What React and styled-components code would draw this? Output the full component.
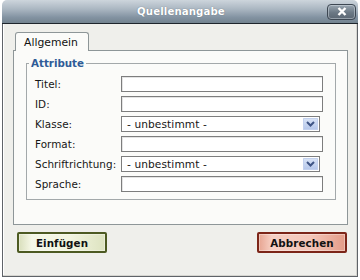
import React from "react";
import styled, { createGlobalStyle } from "styled-components";

const Global = createGlobalStyle`
  html, body { margin: 0; padding: 0; background: #ffffff; }
  body { font-family: "DejaVu Sans", Verdana, sans-serif; }
  * { box-sizing: border-box; }
`;

const Window = styled.div`
  width: 356px;
  height: 277px;
  margin-left: 2px;
  display: flex;
  flex-direction: column;
`;

const TitleBar = styled.div`
  height: 24px;
  flex: none;
  display: grid;
  grid-template-columns: 1fr auto 1fr;
  align-items: center;
  border-radius: 5px 5px 0 0;
  border-bottom: 1px solid #1e252c;
  background: linear-gradient(#cdd5dc 0%, #aab6c1 40%, #8393a2 75%, #73838f 100%);
  padding: 0 2px 1px 0;
`;

const Title = styled.div`
  grid-column: 2;
  color: #ffffff;
  font-weight: bold;
  font-size: 10.2px;
  letter-spacing: 0.1px;
  text-shadow: 0 0 1px rgba(40, 50, 60, 0.6);
  padding-left: 4px;
`;

const CloseButton = styled.button`
  grid-column: 3;
  justify-self: end;
  width: 29px;
  height: 16px;
  padding: 0;
  margin-top: 1px;
  border: 1px solid #3d4752;
  border-radius: 4px;
  background: linear-gradient(#9aa6b1, #6b7884 55%, #5b6773);
  box-shadow: inset 0 0 0 1px rgba(220, 228, 235, 0.45);
  display: flex;
  align-items: center;
  justify-content: center;
`;

const Body = styled.div`
  flex: 1;
  display: flex;
  flex-direction: column;
  background: #efefeb;
  border: 1px solid #5f6368;
  border-top: none;
  box-shadow: inset -1px -1px 0 #d6d5d0, inset 1px 0 0 #ffffff;
  padding: 8px 9px 0 10px;
`;

const TabStrip = styled.div`
  display: flex;
  padding-left: 2px;
`;

const Tab = styled.div`
  width: 74px;
  height: 19px;
  margin-bottom: -1px;
  position: relative;
  z-index: 1;
  background: #fbfbf9;
  border: 1px solid #8e9698;
  border-bottom: none;
  border-radius: 3px 3px 0 0;
  font-size: 10.8px;
  color: #111;
  padding: 3px 0 0 8px;
  line-height: 13px;
`;

const Panel = styled.div`
  height: 175px;
  background: #fbfbf9;
  border: 1px solid #8e9698;
  padding: 6px 11px 0 12px;
`;

const Fieldset = styled.fieldset`
  margin: 0;
  padding: 6px 12px 7px 8px;
  border: 1px solid #a3a8aa;
  display: grid;
  grid-template-columns: 86px 1fr;
  grid-auto-rows: 16px;
  row-gap: 4px;
  align-items: center;
`;

const Legend = styled.legend`
  margin-left: -6px;
  padding: 0 2px;
  font-weight: bold;
  font-size: 10.3px;
  color: #2f5b97;
  line-height: 13px;
`;

const Label = styled.label`
  font-size: 10.4px;
  color: #161616;
  letter-spacing: 0.05px;
  white-space: nowrap;
`;

const TextInput = styled.div`
  height: 16px;
  background: #ffffff;
  border: 1px solid #7d7d7d;
  box-shadow: inset 1px 1px 0 #e4e4e4;
`;

const Select = styled.div`
  height: 16px;
  margin-right: 3px;
  background: #ffffff;
  border: 1px solid #7d7d7d;
  display: flex;
  align-items: center;
  justify-content: space-between;
  padding: 0 1px 0 5px;
  font-size: 10.6px;
  color: #161616;
  letter-spacing: 0.1px;
`;

const ArrowBox = styled.span`
  width: 15px;
  height: 12px;
  border-radius: 1px;
  background: linear-gradient(#dbe5f6, #b4c6ea);
  box-shadow: inset 0 0 0 1px #c3d1ee;
  display: flex;
  align-items: center;
  justify-content: center;
`;

const Footer = styled.div`
  display: flex;
  justify-content: space-between;
  padding: 7px 1px 0 4px;
`;

const variants = {
  ok: {
    border: "#4d5a22",
    bg: "linear-gradient(90deg, #d9dfbc 0%, #f6f8e8 15%, #f2f5df 60%, #dde3c0 100%)",
  },
  cancel: {
    border: "#7c2518",
    bg: "linear-gradient(90deg, #e7a592 0%, #f7d0c4 15%, #f4c6b8 60%, #e49c88 100%)",
  },
};

const Button = styled.button`
  width: 90px;
  height: 21px;
  padding: 0;
  border: 2px solid ${(p) => variants[p.$kind].border};
  border-radius: 2px;
  background: ${(p) => variants[p.$kind].bg};
  box-shadow: inset 0 0 0 1px rgba(255, 255, 255, 0.35);
  font-family: "DejaVu Sans", Verdana, sans-serif;
  font-weight: bold;
  font-size: 10.3px;
  color: #111;
  letter-spacing: 0.1px;
`;

const Chevron = () => (
  <svg width="9" height="6" viewBox="0 0 9 6">
    <path d="M1 1 L4.5 4.5 L8 1" fill="none" stroke="#3f5585" strokeWidth="2" />
  </svg>
);

const CloseX = () => (
  <svg width="10" height="9" viewBox="0 0 10 9">
    <path d="M1.5 1 L8.5 8 M8.5 1 L1.5 8" stroke="#ffffff" strokeWidth="2.4" />
  </svg>
);

const fields = [
  { label: "Titel:", type: "text" },
  { label: "ID:", type: "text" },
  { label: "Klasse:", type: "select" },
  { label: "Format:", type: "text" },
  { label: "Schriftrichtung:", type: "select" },
  { label: "Sprache:", type: "text" },
];

export default function App() {
  return (
    <>
      <Global />
      <Window>
        <TitleBar>
          <Title>Quellenangabe</Title>
          <CloseButton aria-label="Schließen">
            <CloseX />
          </CloseButton>
        </TitleBar>
        <Body>
          <TabStrip>
            <Tab>Allgemein</Tab>
          </TabStrip>
          <Panel>
            <Fieldset>
              <Legend>Attribute</Legend>
              {fields.map((f) => (
                <React.Fragment key={f.label}>
                  <Label>{f.label}</Label>
                  {f.type === "text" ? (
                    <TextInput />
                  ) : (
                    <Select>
                      <span>- unbestimmt -</span>
                      <ArrowBox>
                        <Chevron />
                      </ArrowBox>
                    </Select>
                  )}
                </React.Fragment>
              ))}
            </Fieldset>
          </Panel>
          <Footer>
            <Button $kind="ok">Einfügen</Button>
            <Button $kind="cancel">Abbrechen</Button>
          </Footer>
        </Body>
      </Window>
    </>
  );
}
